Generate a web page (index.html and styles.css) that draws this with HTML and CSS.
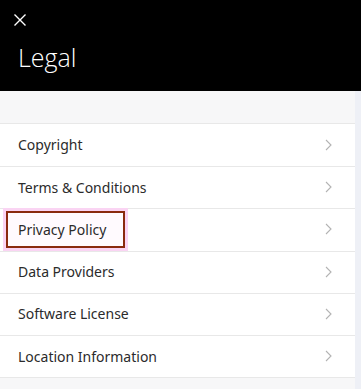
FILE: index.html
```html
<!DOCTYPE html>
<html>
<head>
<meta charset="utf-8">
<link rel="stylesheet" href="styles.css">
</head>
<body>
<header class="header">
  <svg class="close" width="12" height="12" viewBox="0 0 12 12"><path d="M0.5 0.5L11.5 11.5M11.5 0.5L0.5 11.5" stroke="#fff" stroke-width="1.4" fill="none"/></svg>
  <h1 class="title">Legal</h1>
</header>
<div class="body">
  <main class="main">
    <div class="spacer"></div>
    <ul class="list">
      <li class="row"><span>Copyright</span><svg class="chev" width="7" height="12" viewBox="0 0 7 12"><path d="M1 1L6 6L1 11" stroke="#b3b3b3" stroke-width="1.1" fill="none"/></svg></li>
      <li class="row"><span>Terms &amp; Conditions</span><svg class="chev" width="7" height="12" viewBox="0 0 7 12"><path d="M1 1L6 6L1 11" stroke="#b3b3b3" stroke-width="1.1" fill="none"/></svg></li>
      <li class="row row-hl"><span class="hl">Privacy Policy</span><svg class="chev" width="7" height="12" viewBox="0 0 7 12"><path d="M1 1L6 6L1 11" stroke="#b3b3b3" stroke-width="1.1" fill="none"/></svg></li>
      <li class="row"><span>Data Providers</span><svg class="chev" width="7" height="12" viewBox="0 0 7 12"><path d="M1 1L6 6L1 11" stroke="#b3b3b3" stroke-width="1.1" fill="none"/></svg></li>
      <li class="row"><span>Software License</span><svg class="chev" width="7" height="12" viewBox="0 0 7 12"><path d="M1 1L6 6L1 11" stroke="#b3b3b3" stroke-width="1.1" fill="none"/></svg></li>
      <li class="row"><span>Location Information</span><svg class="chev" width="7" height="12" viewBox="0 0 7 12"><path d="M1 1L6 6L1 11" stroke="#b3b3b3" stroke-width="1.1" fill="none"/></svg></li>
    </ul>
  </main>
  <div class="strip"></div>
</div>
</body>
</html>
```
FILE: styles.css
```css
html, body {
  margin: 0;
  padding: 0;
  background: #f7f7f8;
  font-family: "Noto Sans", "DejaVu Sans", sans-serif;
}
.header {
  background: #000;
  height: 91px;
  box-sizing: border-box;
  padding: 14px 0 0 14px;
}
.close {
  display: block;
}
.title {
  margin: 16px 0 0 4px;
  font-family: "Open Sans", sans-serif;
  font-weight: 300;
  font-size: 25px;
  line-height: 30px;
  color: #fff;
}
.body {
  display: flex;
  height: 298px;
}
.main {
  flex: 1;
}
.strip {
  width: 6px;
  background: #eef0f6;
}
.spacer {
  height: 32px;
}
.list {
  list-style: none;
  margin: 0;
  padding: 0;
  background: #fff;
  border-top: 1px solid #e8e8e8;
  border-bottom: 1px solid #e8e8e8;
}
.row {
  position: relative;
  height: 42.2px;
  box-sizing: border-box;
  display: flex;
  align-items: center;
  justify-content: space-between;
  padding: 0 23px 1px 18px;
  font-size: 14px;
  color: #2b2b2b;
}
.row + .row {
  border-top: 1px solid #e8e8e8;
}
.hl {
  position: relative;
  z-index: 1;
}
.row-hl::before {
  content: "";
  position: absolute;
  left: 6px;
  top: 2px;
  width: 119px;
  height: 37px;
  box-sizing: border-box;
  border: 2.5px solid #8a2a0e;
  background: #fffafe;
  box-shadow: 0 0 0 3px #fad4f3;
}
```
